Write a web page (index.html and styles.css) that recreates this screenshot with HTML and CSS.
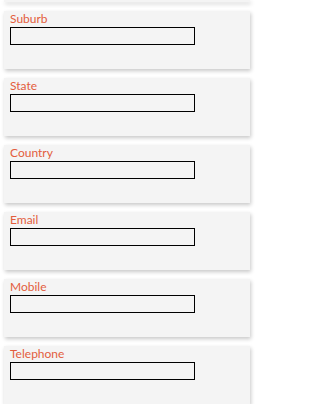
FILE: index.html
```html
<!DOCTYPE html>
<html>
<head>
<meta charset="utf-8">
<link rel="stylesheet" href="styles.css">
</head>
<body>
<div class="list">
  <div class="card card-stub"></div>
  <div class="card"><label class="label">Suburb</label><input class="field" type="text"></div>
  <div class="card"><label class="label">State</label><input class="field" type="text"></div>
  <div class="card"><label class="label">Country</label><input class="field" type="text"></div>
  <div class="card"><label class="label">Email</label><input class="field" type="text"></div>
  <div class="card"><label class="label">Mobile</label><input class="field" type="text"></div>
  <div class="card"><label class="label">Telephone</label><input class="field" type="text"></div>
</div>
</body>
</html>
```
FILE: styles.css
```css
html, body {
  margin: 0;
  padding: 0;
  background: #ffffff;
  font-family: Lato, "Open Sans", sans-serif;
}
.list {
  width: 246px;
  display: flex;
  flex-direction: column;
  gap: 9px;
  padding: 0 0 0 4px;
}
.card {
  box-sizing: border-box;
  width: 246px;
  height: 58px;
  background: #f4f4f4;
  box-shadow: 1px 2px 4px rgba(0, 0, 0, 0.22);
  padding: 0 6px;
  display: flex;
  flex-direction: column;
  align-items: flex-start;
}
.card-stub {
  height: 2px;
}
.label {
  font-size: 12px;
  line-height: 16px;
  color: #e35d3d;
  display: block;
}
.field {
  box-sizing: border-box;
  width: 185px;
  height: 18px;
  margin: 0;
  border: 1px solid #000;
  border-radius: 0;
  background: transparent;
  padding: 0 2px;
  outline: none;
}
```
